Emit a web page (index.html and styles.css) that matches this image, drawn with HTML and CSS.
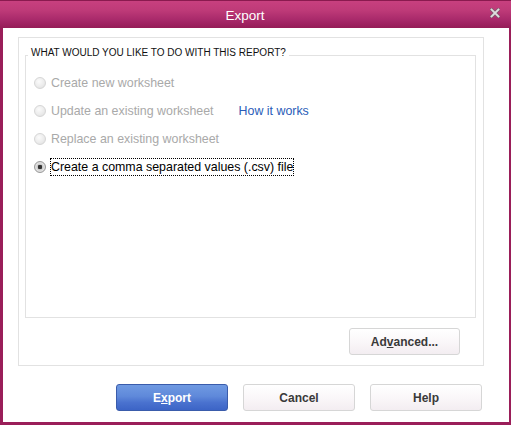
FILE: index.html
```html
<!DOCTYPE html>
<html>
<head>
<meta charset="utf-8">
<link rel="stylesheet" href="styles.css">
</head>
<body>
<div class="window">
  <div class="titlebar">
    <div class="title">Export</div>
    <svg class="close" width="10" height="10" viewBox="0 0 10 10">
      <path d="M1.6 1.6 L8.4 8.4 M8.4 1.6 L1.6 8.4" stroke="#7d5a6c" stroke-width="3.4" stroke-linecap="square"/>
      <path d="M1.6 1.6 L8.4 8.4 M8.4 1.6 L1.6 8.4" stroke="#dedede" stroke-width="2" stroke-linecap="square"/>
    </svg>
  </div>
  <div class="content">
    <div class="panel">
      <fieldset class="group">
        <legend class="legend">WHAT WOULD YOU LIKE TO DO WITH THIS REPORT?</legend>
        <div class="row">
          <span class="radio disabled"></span>
          <span class="label disabled">Create new worksheet</span>
        </div>
        <div class="row">
          <span class="radio disabled"></span>
          <span class="label disabled">Update an existing worksheet</span>
          <a class="link">How it works</a>
        </div>
        <div class="row">
          <span class="radio disabled"></span>
          <span class="label disabled">Replace an existing worksheet</span>
        </div>
        <div class="row">
          <span class="radio checked"></span>
          <span class="label focused">Create a comma separated values (.csv) file</span>
        </div>
      </fieldset>
      <div class="panel-actions">
        <button class="btn">Ad<u>v</u>anced...</button>
      </div>
    </div>
    <div class="actions">
      <button class="btn primary">E<u>x</u>port</button>
      <button class="btn">Cancel</button>
      <button class="btn">Help</button>
    </div>
  </div>
</div>
</body>
</html>
```
FILE: styles.css
```css
html, body {
  margin: 0;
  padding: 0;
}
body {
  font-family: "Liberation Sans", Arial, sans-serif;
  font-size: 12px;
  color: #000;
}
.window {
  width: 511px;
  height: 425px;
  box-sizing: border-box;
  background: #9a1e59;
  display: flex;
  flex-direction: column;
}
.titlebar {
  height: 28px;
  flex: none;
  display: flex;
  align-items: center;
  box-sizing: border-box;
  border-top: 1px solid #8a1a4f;
  background: linear-gradient(#c8407f 0%, #be3a78 35%, #a8296a 70%, #951c57 100%);
}
.title {
  flex: 1;
  text-align: center;
  color: #fff;
  font-size: 13.5px;
  padding-top: 1px;
}
.close {
  flex: none;
  margin-right: 11px;
  margin-top: -3px;
}
.content {
  flex: 1;
  background: #fff;
  margin: 0 2px 3px 3px;
  display: flex;
  flex-direction: column;
}
.panel {
  margin: 9px 0 0 15px;
  width: 466px;
  height: 329px;
  box-sizing: border-box;
  border: 1px solid #e2e2e2;
  display: flex;
  flex-direction: column;
}
.group {
  flex: 1;
  margin: 9px 7px 0 6px;
  padding: 6px 0 0 8px;
  border: 1px solid #e2e2e2;
  min-width: 0;
}
.legend {
  font-size: 10px;
  line-height: 12px;
  padding: 0 3px 4px 3px;
  margin-left: -6px;
  color: #111;
}
.row {
  height: 28px;
  display: flex;
  align-items: center;
  font-size: 12.4px;
}
.radio {
  width: 12px;
  height: 12px;
  box-sizing: border-box;
  border-radius: 50%;
  flex: none;
  margin-right: 4px;
}
.radio.disabled {
  border: 1px solid #d6d6d6;
  background: radial-gradient(circle at 40% 35%, #fbfbfb 0%, #ececec 55%, #dcdcdc 100%);
}
.radio.checked {
  border: 1px solid #9a9a9a;
  background: radial-gradient(circle, #333 0 2px, #c8c8c8 2.5px, #e4e4e4 60%, #b8b8b8 100%);
}
.label {
  border: 1px dotted transparent;
  line-height: 16px;
}
.label.disabled {
  color: #a9a9a9;
}
.label.focused {
  border-color: #000;
  color: #000;
}
.link {
  color: #2a5cb8;
  margin-left: 24px;
  cursor: pointer;
}
.panel-actions {
  display: flex;
  justify-content: flex-end;
  padding: 10px 23px 10px 0;
}
.actions {
  display: flex;
  justify-content: flex-end;
  gap: 15px;
  margin: 18px 27px 0 0;
}
.btn {
  width: 112px;
  height: 27px;
  box-sizing: border-box;
  border: 1px solid #d6d6d6;
  border-radius: 3px;
  background: linear-gradient(#ffffff 0%, #faf7f9 50%, #f3edf1 100%);
  font-family: "Liberation Sans", Arial, sans-serif;
  font-size: 12px;
  font-weight: bold;
  color: #3a3a3a;
  padding: 0;
}
.panel-actions .btn {
  width: 111px;
}
.btn.primary {
  border: 1px solid #3a5cab;
  background: linear-gradient(#6f9ae2 0%, #5f89da 45%, #4a72cf 70%, #3c64c6 100%);
  color: #fff;
}
```
